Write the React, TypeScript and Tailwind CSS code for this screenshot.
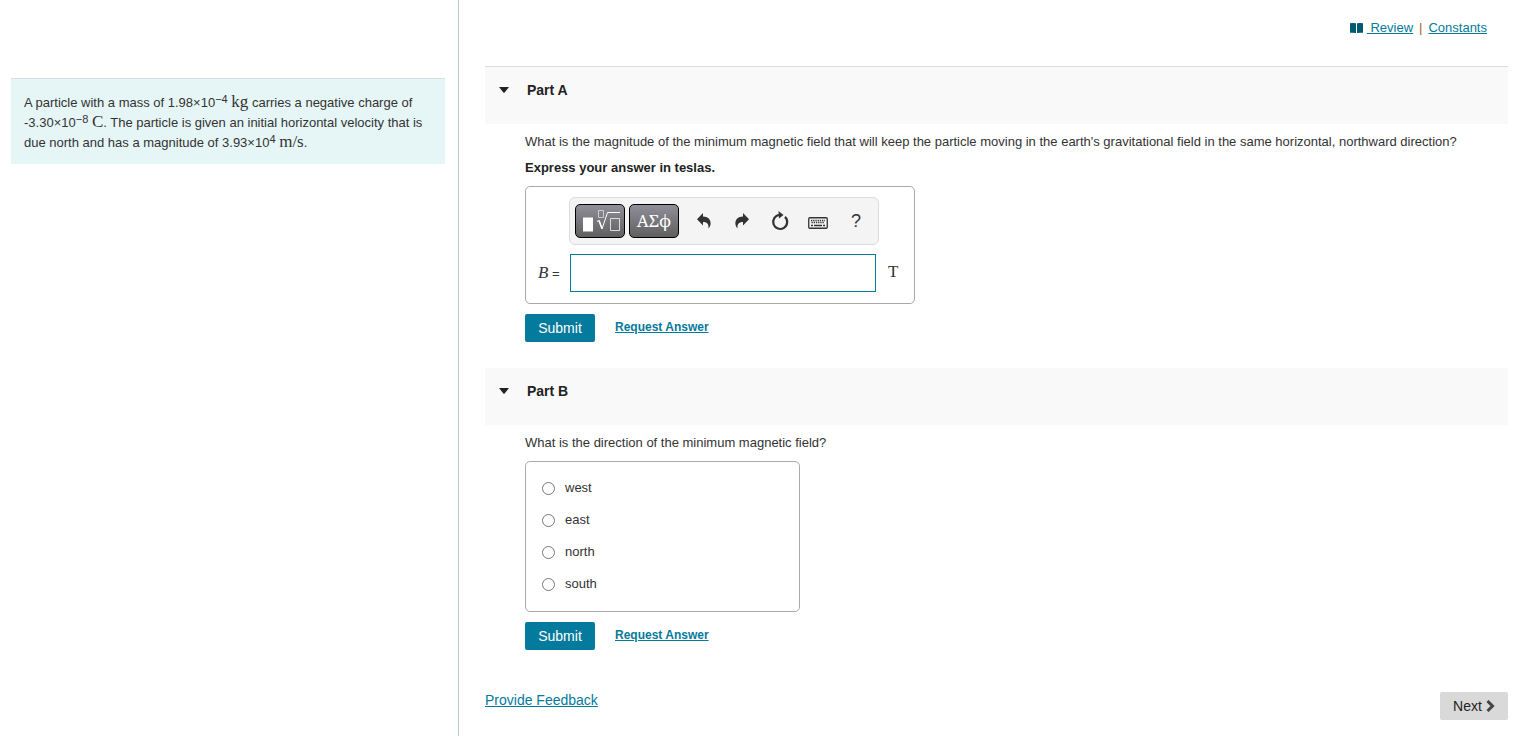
import React, { ReactNode, useState } from "react";

const DIRECTIONS = ["west", "east", "north", "south"];

function Unit({ children }: { children: ReactNode }) {
    return <span className="font-['Liberation_Serif',serif] text-[17px] leading-none">{children}</span>;
}

function Power({ base, exponent }: { base: string; exponent: string }) {
    return (
        <span className="whitespace-nowrap">
            {base}×10<sup className="-top-1 text-[11px] leading-none">{exponent}</sup>
        </span>
    );
}

function Part({ title, first, children }: { title: string; first?: boolean; children: ReactNode }) {
    const [open, setOpen] = useState(true);

    return (
        <section>
            <h2 className={first ? "border-t border-[#dcdcdc] bg-[#f9f9f9] pt-3 pb-6" : "bg-[#f9f9f9] pt-3 pb-6"}>
                <button
                    type="button"
                    aria-expanded={open}
                    onClick={() => setOpen(!open)}
                    className="flex h-[21px] w-full items-center gap-[18px] pl-[14px] text-sm font-bold text-[#222]"
                >
                    <svg width="10" height="6" viewBox="0 0 10 6" fill="currentColor" aria-hidden="true">
                        <path d="M0 0h10L5.6 5.4q-.6.6-1.2 0z" />
                    </svg>
                    {title}
                </button>
            </h2>
            {open && <div className="pt-2 pl-10">{children}</div>}
        </section>
    );
}

function SubmitRow() {
    return (
        <div className="mt-[10px] flex items-start gap-5">
            <button type="submit" className="h-7 w-[70px] rounded-xs bg-[#047a9c] text-sm text-white">
                Submit
            </button>
            <a href="#request" className="pt-1 text-xs leading-[18px] font-bold text-[#047a9c] underline">
                Request Answer
            </a>
        </div>
    );
}

function ToolButton({ label, children }: { label: string; children: ReactNode }) {
    return (
        <button type="button" aria-label={label} className="flex h-[34px] w-[38px] items-center justify-center text-[#333]">
            {children}
        </button>
    );
}

const darkButton =
    "flex h-[34px] w-[50px] items-center justify-center rounded-[5px] border border-black bg-linear-to-b from-[#908e99] to-[#606060] text-white";

function MathToolbar() {
    return (
        <div className="flex h-12 w-[310px] items-center rounded-md border border-[#dcdcdc] bg-[#f4f4f4] pl-[5px]">
            <button type="button" aria-label="Templates" className={darkButton}>
                <svg width="40" height="24" viewBox="0 0 40 24" fill="none" stroke="#fff" aria-hidden="true">
                    <path d="M3 8.500h10v14H3z" fill="#fff" stroke="none" />
                    <path d="M18.500 1.500h5v7h-5z" stroke="#ccc" />
                    <path d="M17 12.500l2-1 3 8.500 5.500-16.500H40" />
                    <path d="M19 11.500l3 8" strokeWidth="1.500" />
                    <path d="M30.500 9.500h9v12h-9z" stroke="#ddd" />
                </svg>
            </button>
            <button
                type="button"
                aria-label="Greek symbols"
                className={"ml-1 pb-[2px] font-['Noto_Serif',serif] text-[17px] leading-none " + darkButton}
            >
                ΑΣϕ
            </button>
            <div className="ml-[6px] flex">
                <ToolButton label="Undo">
                    <svg width="14" height="16" viewBox="0 0 14 16" fill="currentColor" aria-hidden="true">
                        <path d="M6 0v3.500C11 3.500 14 6.500 13.600 11c-.2 2-1 3.200-2.200 4.400C12 11.500 10.500 9 6 9v3.500L0 6.200z" />
                    </svg>
                </ToolButton>
                <ToolButton label="Redo">
                    <svg width="14" height="16" viewBox="0 0 14 16" fill="currentColor" aria-hidden="true">
                        <path d="M8 0v3.500C3 3.500 0 6.500.4 11c.2 2 1 3.200 2.200 4.400C2 11.500 3.500 9 8 9v3.500l6-6.300z" />
                    </svg>
                </ToolButton>
                <ToolButton label="Reset">
                    <svg width="18" height="20" viewBox="0 0 18 20" fill="none" aria-hidden="true">
                        <path d="M14 5.900A7 7 0 1 1 8.500 4" stroke="currentColor" strokeWidth="2.200" />
                        <path d="M7.500 0l5 4-4.500 3.600z" fill="currentColor" />
                    </svg>
                </ToolButton>
                <ToolButton label="Keyboard shortcuts">
                    <svg width="20" height="12" viewBox="0 0 20 12" fill="none" stroke="currentColor" className="mt-1" aria-hidden="true">
                        <rect x=".75" y=".75" width="18.500" height="10.500" rx="1" strokeWidth="1.300" />
                        <path d="M3 3.500h14M3.500 5.500h13" strokeWidth="1.300" strokeDasharray="1.300 .9" />
                        <path d="M3 8.500h2m1 0h8m1 0h2" strokeWidth="1.300" />
                    </svg>
                </ToolButton>
                <ToolButton label="Help">
                    <span className="text-lg leading-none">?</span>
                </ToolButton>
            </div>
        </div>
    );
}

export default function App() {
    const [answer, setAnswer] = useState("");
    const [direction, setDirection] = useState("");

    return (
        <div className="grid min-h-screen grid-cols-[459px_minmax(0,1fr)] bg-white font-['Liberation_Sans',Arial,sans-serif] text-[13px] leading-5 text-[#333]">
            <aside className="border-r border-[#b9cbd9] pt-[78px] pr-[13px] pl-[11px]">
                <p className="border-t border-[#d5dfdf] bg-[#e6f6f6] px-[13px] pt-[14px] pb-[11px]">
                    A particle with a mass of <Power base="1.98" exponent="−4" /> <Unit>kg</Unit> carries a negative charge
                    of <Power base="-3.30" exponent="−8" /> <Unit>C</Unit>. The particle is given an initial horizontal
                    velocity that is due north and has a magnitude of <Power base="3.93" exponent="4" /> <Unit>m/s</Unit>.
                </p>
            </aside>

            <main className="pr-[14px] pb-4 pl-[26px]">
                <nav className="flex h-[66px] items-start justify-end gap-[6px] pt-[18px] pr-[21px] text-[#047a9c]">
                    <a href="#review" className="flex items-center gap-1">
                        <svg width="13" height="10" viewBox="0 0 13 10" fill="#005a70" aria-hidden="true">
                            <path d="M0 .3Q3-.2 6 .3V10Q3 9.400 0 9.800zM7 .3q3-.5 6 0v9.500Q10 9.400 7 10z" />
                        </svg>
                        <span className="whitespace-pre underline"> Review</span>
                    </a>
                    <span className="text-[#a35f1a]">|</span>
                    <a href="#constants" className="underline">
                        Constants
                    </a>
                </nav>

                <Part title="Part A" first>
                    <form onSubmit={(e) => e.preventDefault()}>
                        <p>
                            What is the magnitude of the minimum magnetic field that will keep the particle moving in the
                            earth's gravitational field in the same horizontal, northward direction?
                        </p>
                        <p className="mt-[6px] font-bold text-[#222]">Express your answer in teslas.</p>
                        <div className="mt-2 w-fit rounded-[5px] border border-[#aaa] pt-[10px] pr-4 pb-[11px] pl-3">
                            <div className="ml-[31px]">
                                <MathToolbar />
                            </div>
                            <div className="mt-[9px] flex items-center">
                                <label htmlFor="answer" className="w-8 leading-4">
                                    <i className="font-['Liberation_Serif',serif] text-[17px] leading-none">B</i> =
                                </label>
                                <input
                                    id="answer"
                                    type="text"
                                    value={answer}
                                    onChange={(e) => setAnswer(e.target.value)}
                                    className="h-[38px] w-[306px] border border-[#047a9c] bg-white px-2 text-base outline-none"
                                />
                                <span className="ml-3">
                                    <Unit>T</Unit>
                                </span>
                            </div>
                        </div>
                        <SubmitRow />
                    </form>
                </Part>

                <div className="mt-[26px]">
                    <Part title="Part B">
                        <form onSubmit={(e) => e.preventDefault()}>
                            <p>What is the direction of the minimum magnetic field?</p>
                            <fieldset className="mt-2 w-[275px] rounded-[5px] border border-[#aaa] px-4 pt-[10px] pb-[11px]">
                                {DIRECTIONS.map((name) => (
                                    <label key={name} className="flex h-8 items-center gap-[10px]">
                                        <input
                                            type="radio"
                                            name="direction"
                                            value={name}
                                            checked={direction === name}
                                            onChange={() => setDirection(name)}
                                            className="size-[13px]"
                                        />
                                        {name}
                                    </label>
                                ))}
                            </fieldset>
                            <SubmitRow />
                        </form>
                    </Part>
                </div>

                <footer className="mt-10 flex items-end justify-between text-sm">
                    <a href="#feedback" className="self-start text-[#047a9c] underline">
                        Provide Feedback
                    </a>
                    <button
                        type="button"
                        className="mt-[2px] flex h-7 w-[68px] items-center justify-center gap-1 rounded-xs bg-[#d9d9d9] text-[#222]"
                    >
                        Next
                        <svg width="9" height="12" viewBox="0 0 9 12" fill="none" stroke="#444" strokeWidth="3" aria-hidden="true">
                            <path d="M1.500 1l5 5-5 5" />
                        </svg>
                    </button>
                </footer>
            </main>
        </div>
    );
}
